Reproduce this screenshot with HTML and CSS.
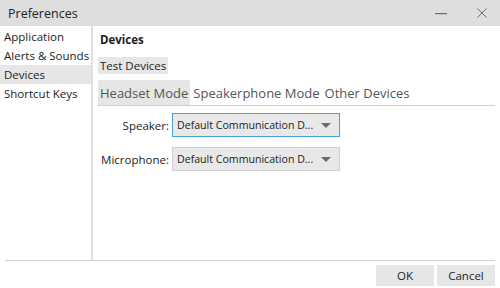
FILE: index.html
```html
<!DOCTYPE html>
<html lang="en">
<head>
    <meta charset="UTF-8">
    <title>Preferences</title>
    <link rel="stylesheet" href="styles.css">
</head>
<body>
    <div class="window">
        <div class="titlebar">
            <span class="title">Preferences</span>
            <div class="controls">
                <span class="ctl ctl-min"><svg width="12" height="2" viewBox="0 0 12 2"><rect x="0" y="0" width="12" height="1.2" fill="#6a6a6a"/></svg></span>
                <span class="ctl ctl-close"><svg width="10" height="10" viewBox="0 0 10 10"><path d="M0.5 0.5 L9.5 9.5 M9.5 0.5 L0.5 9.5" stroke="#6a6a6a" stroke-width="1"/></svg></span>
            </div>
        </div>

        <div class="main">
            <ul class="sidebar">
                <li>Application</li>
                <li>Alerts &amp; Sounds</li>
                <li class="active">Devices</li>
                <li>Shortcut Keys</li>
            </ul>

            <div class="panel">
                <h2>Devices</h2>
                <div><span class="test-btn">Test Devices</span></div>
                <div class="tabs">
                    <span class="tab selected">Headset Mode</span>
                    <span class="tab">Speakerphone Mode</span>
                    <span class="tab">Other Devices</span>
                </div>
                <div class="form">
                    <div class="row">
                        <label>Speaker:</label>
                        <div class="select focused">Default Communication D...<span class="caret"></span></div>
                    </div>
                    <div class="row">
                        <label>Microphone:</label>
                        <div class="select">Default Communication D...<span class="caret"></span></div>
                    </div>
                </div>
            </div>
        </div>

        <div class="footer">
            <button class="btn">OK</button>
            <button class="btn">Cancel</button>
        </div>
    </div>
</body>
</html>
```

FILE: styles.css
```css
body {
    margin: 0;
    padding: 0;
    background-color: #fff;
    font-family: "Open Sans", "Noto Sans", Arial, sans-serif;
    font-size: 12px;
    color: #222;
}
.window {
    width: 500px;
    height: 288px;
    display: flex;
    flex-direction: column;
}
.titlebar {
    height: 26px;
    background-color: #dedede;
    display: flex;
    align-items: center;
    justify-content: space-between;
}
.title {
    font-size: 12.5px;
    color: #222;
    padding-left: 8px;
}
.controls {
    display: flex;
    align-items: center;
}
.ctl {
    display: flex;
    align-items: center;
    justify-content: center;
}
.ctl-min {
    width: 12px;
    margin-right: 30px;
    padding-top: 1px;
}
.ctl-close {
    width: 10px;
    margin-right: 13px;
}
.main {
    display: flex;
    height: 234px;
    margin: 0 5px;
    border-bottom: 1px solid #d0d0d0;
}
.sidebar {
    list-style: none;
    margin: 0 0 0 -5px;
    padding: 1px 0 0 0;
    width: 91px;
    border-right: 2px solid #e0e0e0;
}
.sidebar li {
    height: 19px;
    line-height: 19px;
    padding-left: 4px;
    font-size: 11.5px;
    white-space: nowrap;
}
.sidebar li.active {
    background-color: #e6e6e6;
}
.panel {
    flex: 1;
    padding: 6px 0 0 5px;
}
.panel h2 {
    margin: 0 0 0 2px;
    font-size: 11.5px;
    font-weight: bold;
    line-height: 16px;
}
.test-btn {
    display: inline-block;
    margin-top: 9px;
    padding: 0 2px;
    height: 17px;
    line-height: 17px;
    background-color: #e6e6e6;
    font-size: 11.5px;
}
.tabs {
    margin-top: 6px;
    display: flex;
    gap: 1px;
    border-bottom: 1px solid #d0d0d0;
    height: 25px;
}
.tab {
    padding: 0 2px;
    line-height: 26px;
    font-size: 13px;
    color: #555;
    white-space: nowrap;
}
.tab.selected {
    background-color: #e6e6e6;
}
.form {
    padding-top: 7px;
}
.row {
    display: flex;
    align-items: center;
    margin-bottom: 10px;
}
.row label {
    width: 71px;
    text-align: right;
    padding-right: 3px;
    font-size: 11.5px;
}
.select {
    position: relative;
    width: 150px;
    height: 22px;
    line-height: 22px;
    padding-left: 4px;
    padding-right: 12px;
    background-color: #e8e8e8;
    border: 1px solid #cfcfcf;
    font-size: 10.6px;
    white-space: nowrap;
}
.select.focused {
    border-color: #4aa3d8;
}
.caret {
    position: absolute;
    right: 8px;
    top: 9px;
    width: 0;
    height: 0;
    border-left: 5px solid transparent;
    border-right: 5px solid transparent;
    border-top: 5px solid #6a6a6a;
}
.footer {
    display: flex;
    justify-content: flex-end;
    padding: 4px 5px 0 0;
    gap: 3px;
}
.btn {
    font-family: inherit;
    font-size: 11.5px;
    color: #222;
    background-color: #e6e6e6;
    border: none;
    height: 21px;
    width: 58px;
    padding: 0;
}
```
